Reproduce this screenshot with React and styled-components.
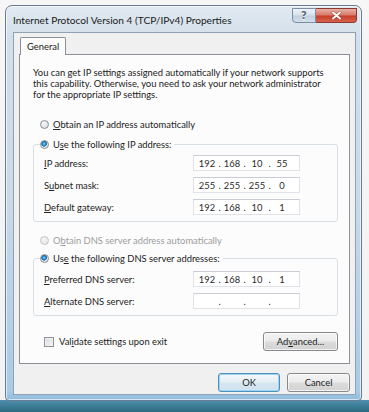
import styled, { createGlobalStyle } from "styled-components";

const GlobalStyle = createGlobalStyle`
  html, body {
    margin: 0;
    padding: 0;
  }
  body {
    font-family: Lato, "Noto Sans", sans-serif;
    font-size: 9.4px;
    color: #222222;
  }
`;

const Page = styled.div`
  width: 369px;
  height: 412px;
  box-sizing: border-box;
  padding: 5px 0 0 5px;
  overflow: hidden;
  background: linear-gradient(
    to bottom,
    #f6f6f6 0,
    #f2f2f2 400px,
    #4f90ad 400px,
    #2b6a80 412px
  );
`;

const Window = styled.div`
  width: 357px;
  height: 396px;
  box-sizing: border-box;
  display: flex;
  flex-direction: column;
  padding: 0 5px 5px 7px;
  border: 1px solid #6a7d90;
  border-radius: 7px 7px 4px 4px;
  background: linear-gradient(
    to bottom,
    #e2eaf2 0,
    #d3dfea 30px,
    #c9d9e8 200px,
    #a9cbe4 385px,
    #8fbcdc 100%
  );
  box-shadow: inset 0 0 0 1px rgba(255, 255, 255, 0.6);
`;

const TitleBar = styled.div`
  height: 26px;
  display: flex;
  justify-content: space-between;
  align-items: flex-start;
`;

const Title = styled.div`
  padding: 8px 0 0 0;
  font-size: 10.15px;
  color: #1a1a1a;
  white-space: nowrap;
`;

const CaptionButtons = styled.div`
  display: flex;
  margin-top: 2px;
  margin-right: -1px;
`;

const CaptionButton = styled.div`
  height: 15px;
  width: ${(p) => (p.$close ? "41px" : "24px")};
  box-sizing: border-box;
  display: flex;
  align-items: center;
  justify-content: center;
  border: 1px solid ${(p) => (p.$close ? "#8a3a30" : "#7b8ea3")};
  border-left-width: ${(p) => (p.$close ? "0" : "1px")};
  border-radius: ${(p) => (p.$close ? "0 0 4px 0" : "0 0 0 4px")};
  background: ${(p) =>
    p.$close
      ? "linear-gradient(to bottom, #eab0a6 0%, #d97b6c 45%, #c7402c 55%, #d8624c 100%)"
      : "linear-gradient(to bottom, #eef3f8 0%, #d8e2ec 45%, #c3d1df 55%, #d3dee9 100%)"};
  color: #5a6b7d;
  font-family: "DejaVu Sans", sans-serif;
  font-weight: bold;
  font-size: 10px;
  text-shadow: 0 1px 0 #ffffff;
`;

const Client = styled.div`
  flex: 1;
  display: flex;
  flex-direction: column;
  background: #f0f0f0;
  border: 1px solid #8fa2b5;
  padding: 4px 5px 0 5px;
`;

const TabStrip = styled.div`
  display: flex;
  padding-left: 1px;
  position: relative;
  z-index: 1;
`;

const Tab = styled.div`
  height: 17px;
  padding: 0 6px;
  display: flex;
  align-items: center;
  background: #fcfcfc;
  border: 1px solid #8c8f96;
  border-bottom: none;
  border-radius: 2px 2px 0 0;
`;

const TabPanel = styled.div`
  height: 310px;
  box-sizing: border-box;
  margin-top: -1px;
  background: #fcfcfc;
  border: 1px solid #8c8f96;
  padding: 12px 11px 0 13px;
  display: flex;
  flex-direction: column;
`;

const Intro = styled.p`
  margin: 0;
  line-height: 11px;
  white-space: nowrap;
`;

const OptionRow = styled.label`
  display: flex;
  align-items: center;
  height: 14px;
  gap: 4px;
  margin: ${(p) => p.$margin || "0"};
  padding-left: 7px;
  color: ${(p) => (p.$disabled ? "#9c9c9c" : "inherit")};
`;

const Radio = styled.span`
  width: 9px;
  height: 9px;
  border-radius: 50%;
  box-sizing: border-box;
  border: 1px solid ${(p) => (p.$disabled ? "#c4c4c4" : "#8a8d92")};
  background: ${(p) =>
    p.$checked
      ? "radial-gradient(circle at 45% 40%, #8fd0f5 0, #2c8fd0 1.6px, #1a5f9a 2.6px, #e9eef2 3px, #d7dce0 100%)"
      : p.$disabled
      ? "radial-gradient(circle at 40% 35%, #f5f5f5 0, #e4e4e4 100%)"
      : "radial-gradient(circle at 40% 35%, #f8f8f8 0, #d5d8db 100%)"};
`;

const GroupBox = styled.fieldset`
  margin: ${(p) => p.$margin || "0"};
  padding: ${(p) => p.$pad || "4px"} 37px 6px 10px;
  border: 1px solid #d8e0e6;
  border-radius: 3px;
  display: flex;
  flex-direction: column;
  gap: 6px;
`;

const Legend = styled.legend`
  padding: 0 3px 0 0;
  margin-left: -4px;
  height: 14px;
  display: flex;
  align-items: center;
  gap: 4px;
`;

const FieldRow = styled.div`
  display: flex;
  align-items: center;
  justify-content: space-between;
  height: 16px;
`;

const IpBox = styled.div`
  width: 107px;
  height: 16px;
  box-sizing: border-box;
  display: flex;
  align-items: center;
  padding-left: 3px;
  background: #ffffff;
  border: 1px solid #dfe3e8;
  border-top-color: #c9ccd2;
  color: #2a2a2a;
`;

const Octet = styled.span`
  width: 20px;
  text-align: center;
`;

const Dot = styled.span`
  width: 5px;
  text-align: center;
`;

const Key = styled.span`
  text-decoration: underline;
  text-underline-offset: 1px;
`;

const BottomRow = styled.div`
  display: flex;
  align-items: center;
  justify-content: space-between;
  margin-top: 16px;
  padding-left: 11px;
`;

const CheckLabel = styled.label`
  display: flex;
  align-items: center;
  gap: 5px;
`;

const Checkbox = styled.span`
  width: 10px;
  height: 10px;
  box-sizing: border-box;
  border: 1px solid #8e9196;
  background: linear-gradient(135deg, #d8dbde 0, #f4f5f6 100%);
  box-shadow: inset 0 0 0 1px #eef0f2;
`;

const Button = styled.div`
  width: ${(p) => p.$w};
  height: 19px;
  box-sizing: border-box;
  display: flex;
  align-items: center;
  justify-content: center;
  border: 1px solid ${(p) => (p.$default ? "#4d8fbf" : "#868a8f")};
  border-radius: 3px;
  background: ${(p) =>
    p.$default
      ? "linear-gradient(to bottom, #f2f7fa 0%, #e6eff5 48%, #d6e6f0 52%, #cfe2ee 100%)"
      : "linear-gradient(to bottom, #f4f4f4 0%, #ebebeb 48%, #dcdcdc 52%, #d2d2d2 100%)"};
  box-shadow: inset 0 0 0 1px
    ${(p) => (p.$default ? "#9fd4ef" : "rgba(255, 255, 255, 0.7)")};
  color: #1f1f1f;
`;

const Footer = styled.div`
  display: flex;
  justify-content: flex-end;
  gap: 7px;
  padding: 9px 0 0 0;
`;

const CloseGlyph = () => (
  <svg width="11" height="9" viewBox="0 0 11 9">
    <path
      d="M2 1.5 L9 7.5 M9 1.5 L2 7.5"
      stroke="#7a2418"
      strokeWidth="3.2"
      strokeLinecap="round"
      opacity="0.45"
    />
    <path
      d="M2 1.5 L9 7.5 M9 1.5 L2 7.5"
      stroke="#ffffff"
      strokeWidth="2"
      strokeLinecap="round"
    />
  </svg>
);

const IpField = ({ value }) => (
  <IpBox>
    {value.map((part, i) => (
      <span key={i} style={{ display: "contents" }}>
        <Octet>{part}</Octet>
        {i < 3 && <Dot>.</Dot>}
      </span>
    ))}
  </IpBox>
);

const App = () => {
  return (
    <>
      <GlobalStyle />
      <Page>
        <Window>
          <TitleBar>
            <Title>Internet Protocol Version 4 (TCP/IPv4) Properties</Title>
            <CaptionButtons>
              <CaptionButton>?</CaptionButton>
              <CaptionButton $close>
                <CloseGlyph />
              </CaptionButton>
            </CaptionButtons>
          </TitleBar>
          <Client>
            <TabStrip>
              <Tab>General</Tab>
            </TabStrip>
            <TabPanel>
              <Intro>
                You can get IP settings assigned automatically if your network supports
                <br />
                this capability. Otherwise, you need to ask your network administrator
                <br />
                for the appropriate IP settings.
              </Intro>

              <OptionRow $margin="17px 0 0 0">
                <Radio />
                <span>
                  <Key>O</Key>btain an IP address automatically
                </span>
              </OptionRow>

              <GroupBox $margin="6px 0 0 0">
                <Legend>
                  <Radio $checked />
                  <span>
                    U<Key>s</Key>e the following IP address:
                  </span>
                </Legend>
                <FieldRow>
                  <span>
                    <Key>I</Key>P address:
                  </span>
                  <IpField value={["192", "168", "10", "55"]} />
                </FieldRow>
                <FieldRow>
                  <span>
                    S<Key>u</Key>bnet mask:
                  </span>
                  <IpField value={["255", "255", "255", "0"]} />
                </FieldRow>
                <FieldRow>
                  <span>
                    <Key>D</Key>efault gateway:
                  </span>
                  <IpField value={["192", "168", "10", "1"]} />
                </FieldRow>
              </GroupBox>

              <OptionRow $margin="11px 0 0 0" $disabled>
                <Radio $disabled />
                <span>
                  O<Key>b</Key>tain DNS server address automatically
                </span>
              </OptionRow>

              <GroupBox $margin="4px 0 0 0" $pad="6px">
                <Legend>
                  <Radio $checked />
                  <span>
                    Us<Key>e</Key> the following DNS server addresses:
                  </span>
                </Legend>
                <FieldRow>
                  <span>
                    <Key>P</Key>referred DNS server:
                  </span>
                  <IpField value={["192", "168", "10", "1"]} />
                </FieldRow>
                <FieldRow>
                  <span>
                    <Key>A</Key>lternate DNS server:
                  </span>
                  <IpField value={["", "", "", ""]} />
                </FieldRow>
              </GroupBox>

              <BottomRow>
                <CheckLabel>
                  <Checkbox />
                  <span>
                    Val<Key>i</Key>date settings upon exit
                  </span>
                </CheckLabel>
                <Button $w="75px">
                  <span>
                    Ad<Key>v</Key>anced...
                  </span>
                </Button>
              </BottomRow>
            </TabPanel>
            <Footer>
              <Button $w="62px" $default>
                OK
              </Button>
              <Button $w="63px">Cancel</Button>
            </Footer>
          </Client>
        </Window>
      </Page>
    </>
  );
};

export default App;
